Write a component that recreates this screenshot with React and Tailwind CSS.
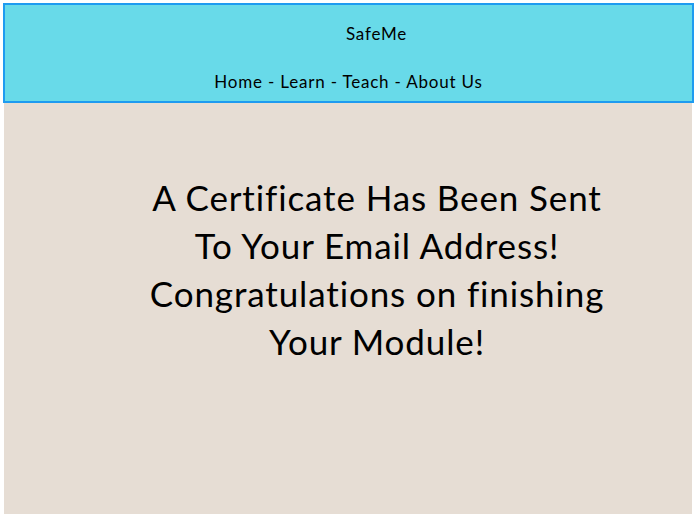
export default function App() {
  return (
    <div className="w-[698px] h-[523px] bg-white pt-[3px]" style={{ fontFamily: "Lato, 'Noto Sans', sans-serif", fontVariantLigatures: "none" }}>
      <header className="ml-[3px] w-[691px] h-[100px] border-2 border-[#1e9bf0] bg-[#68dae9] text-black flex flex-col tracking-[0.05em]">
        <div className="pl-[56px] text-center text-[17px] leading-none pt-[20px]">SafeMe</div>
        <nav className="text-center text-[17px] leading-none pt-[31px]">Home - Learn - Teach - About Us</nav>
      </header>
      <main className="ml-[4px] w-[688px] h-[411px] bg-[#e6ddd4] pt-[70px]">
        <h1 className="ml-[133px] w-[480px] text-center text-[35px] leading-[48px] tracking-[0.025em] text-black font-normal">
          A Certificate Has Been Sent<br />
          To Your Email Address!<br />
          Congratulations on finishing<br />
          Your Module!
        </h1>
      </main>
    </div>
  );
}
